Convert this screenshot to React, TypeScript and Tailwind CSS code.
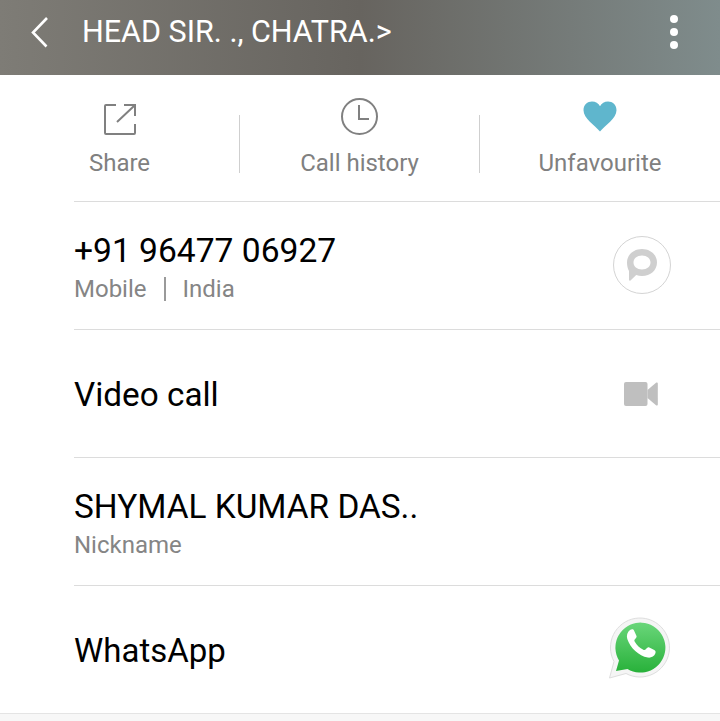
const ROW = "ml-[74px] border-t border-[#dcdcdc] flex items-center justify-between";

const Divider = () => <div className="h-[58px] bg-[#cfcfcf] mt-[40px]" />;

const Action = ({ label, children }: { label: string; children: React.ReactNode }) => (
  <div className="flex flex-col items-center">
    <div className="h-[48px] mt-[20px] flex items-center justify-center">{children}</div>
    <span className="mt-[4px] text-[24px] leading-[32px] text-[#808080]">{label}</span>
  </div>
);

export default function App() {
  return (
    <div className="w-[720px] h-[721px] bg-white overflow-hidden" style={{ fontFamily: "Roboto, sans-serif" }}>
      <header className="h-[75px] pb-[12px] flex items-center bg-gradient-to-r from-[#7e7c76] via-[#67645f] to-[#7f8c8c] text-white">
        <svg width="20" height="32" viewBox="0 0 20 32" className="ml-[30px]" fill="none" stroke="white" strokeWidth="2.6">
          <path d="M17 2 3 16.500 16.500 30.500" />
        </svg>
        <h1 className="ml-[32px] flex-1 text-[30.500px] leading-[36px]">HEAD SIR. ., CHATRA.&gt;</h1>
        <div className="mr-[42px] flex flex-col gap-[5px]">
          <span className="block w-[8px] h-[8px] rounded-full bg-white" />
          <span className="block w-[8px] h-[8px] rounded-full bg-white" />
          <span className="block w-[8px] h-[8px] rounded-full bg-white" />
        </div>
      </header>

      <section className="h-[126px] grid grid-cols-[239px_1px_239px_1px_1fr]">
        <Action label="Share">
          <svg width="32" height="32" viewBox="0 0 32 32" className="mt-[2px]" fill="none" stroke="#808080" strokeWidth="2">
            <path d="M12 1H2a1 1 0 0 0-1 1v27a1 1 0 0 0 1 1h28a1 1 0 0 0 1-1v-9" />
            <path d="M13 18 30 2M20 1h11v11" />
          </svg>
        </Action>
        <Divider />
        <Action label="Call history">
          <svg width="37" height="37" viewBox="0 0 37 37" className="mb-[5px]" fill="none" stroke="#808080" strokeWidth="2">
            <circle cx="18.500" cy="18.500" r="17.500" />
            <path d="M18 7v14h10" />
          </svg>
        </Action>
        <Divider />
        <Action label="Unfavourite">
          <svg width="34" height="31" viewBox="0 0 34 32" className="mb-[5px]" fill="#5fb6cd" preserveAspectRatio="none">
            <path d="M17 31.500C12 25 .5 18 .5 9.500.5 4 4.500.5 9 .5c3.500 0 6.500 2 8 5 1.500-3 4.500-5 8-5 4.500 0 8.500 3.500 8.500 9 0 8.500-11.500 15.500-16.500 22Z" />
          </svg>
        </Action>
      </section>

      <div className={`${ROW} h-[128px] pr-[49px]`}>
        <div className="mt-[4px]">
          <div className="text-[33.600px] leading-[38px] text-black">+91 96477 06927</div>
          <div className="mt-[4px] text-[24px] leading-[30px] text-[#858585] flex items-center">
            Mobile
            <span className="w-[2px] h-[24px] bg-[#9a9a9a] mx-[17px]" />
            India
          </div>
        </div>
        <div className="w-[58px] h-[58px] -mt-[2px] rounded-full border border-[#d4d4d4] flex items-center justify-center">
          <svg width="32" height="34" viewBox="0 0 32 34" fill="#cfcfcf">
            <path fillRule="evenodd" d="M16 1c8.500 0 15 5.800 15 13.500S24.500 28 16 28c-2 0-4-.3-5.800-1L4.500 32.500c-.6.5-1.500.2-1.500-.7V23C1.800 20.800 1 17.800 1 14.500 1 6.800 7.500 1 16 1Zm0 6.500c-5 0-8.500 3-8.500 7s3.500 7 8.500 7 8.500-3 8.500-7-3.500-7-8.500-7Z" />
          </svg>
        </div>
      </div>

      <div className={`${ROW} h-[128px] pr-[62px]`}>
        <span className="mt-[2px] text-[33.300px] leading-[38px] text-black">Video call</span>
        <svg width="34" height="24" viewBox="0 0 34 24" fill="#bfbfbf">
          <rect x="0" y="0" width="23.500" height="24" rx="2" />
          <path d="M23.500 8 32 .8c.8-.6 1.800-.2 1.800.8v20.800c0 1-1 1.400-1.800.8L23.500 16Z" />
        </svg>
      </div>

      <div className={`${ROW} h-[128px]`}>
        <div className="mt-[4px]">
          <div className="text-[33.400px] leading-[38px] text-black">SHYMAL KUMAR DAS..</div>
          <div className="mt-[4px] text-[24px] leading-[30px] text-[#858585]">Nickname</div>
        </div>
      </div>

      <div className={`${ROW} h-[128px] pr-[50px]`}>
        <span className="mt-[2px] text-[33px] leading-[38px] text-black">WhatsApp</span>
        <svg width="62" height="62" viewBox="0 0 62 62" className="mt-[-3px]">
          <defs>
            <linearGradient id="wa" x1="0" y1="0" x2="0" y2="1">
              <stop offset="0" stopColor="#6ad67a" />
              <stop offset="1" stopColor="#28b13a" />
            </linearGradient>
          </defs>
          <path d="M1.500 61 6 44.500A29.500 29.500 0 1 1 18 56.500Z" fill="#f5f5f5" stroke="#dedede" strokeWidth="1" />
          <path d="M8 54 11 43.500A25 25 0 1 1 19.500 52Z" fill="url(#wa)" />
          <path d="M22 13c1.500-1 3.500-1 4 .5l2.500 5.500c.4 1-.3 2-1.500 3.200-.8.8-.8 1.500-.2 2.600 2 3.500 5 6.300 8.500 8 1 .5 1.800.3 2.500-.5 1-1.200 2-2.500 3-2l5.500 2.800c1.500.7 1.500 2 1 3.500-1 3-4.500 4.500-7.500 4-9-1.500-17.500-9.500-20.500-18.500-1-3.500 0-7 2.700-9.100Z" fill="white" />
        </svg>
      </div>

      <div className="border-t border-[#e4e4e4] bg-[#f7f7f7] h-[10px]" />
    </div>
  );
}
